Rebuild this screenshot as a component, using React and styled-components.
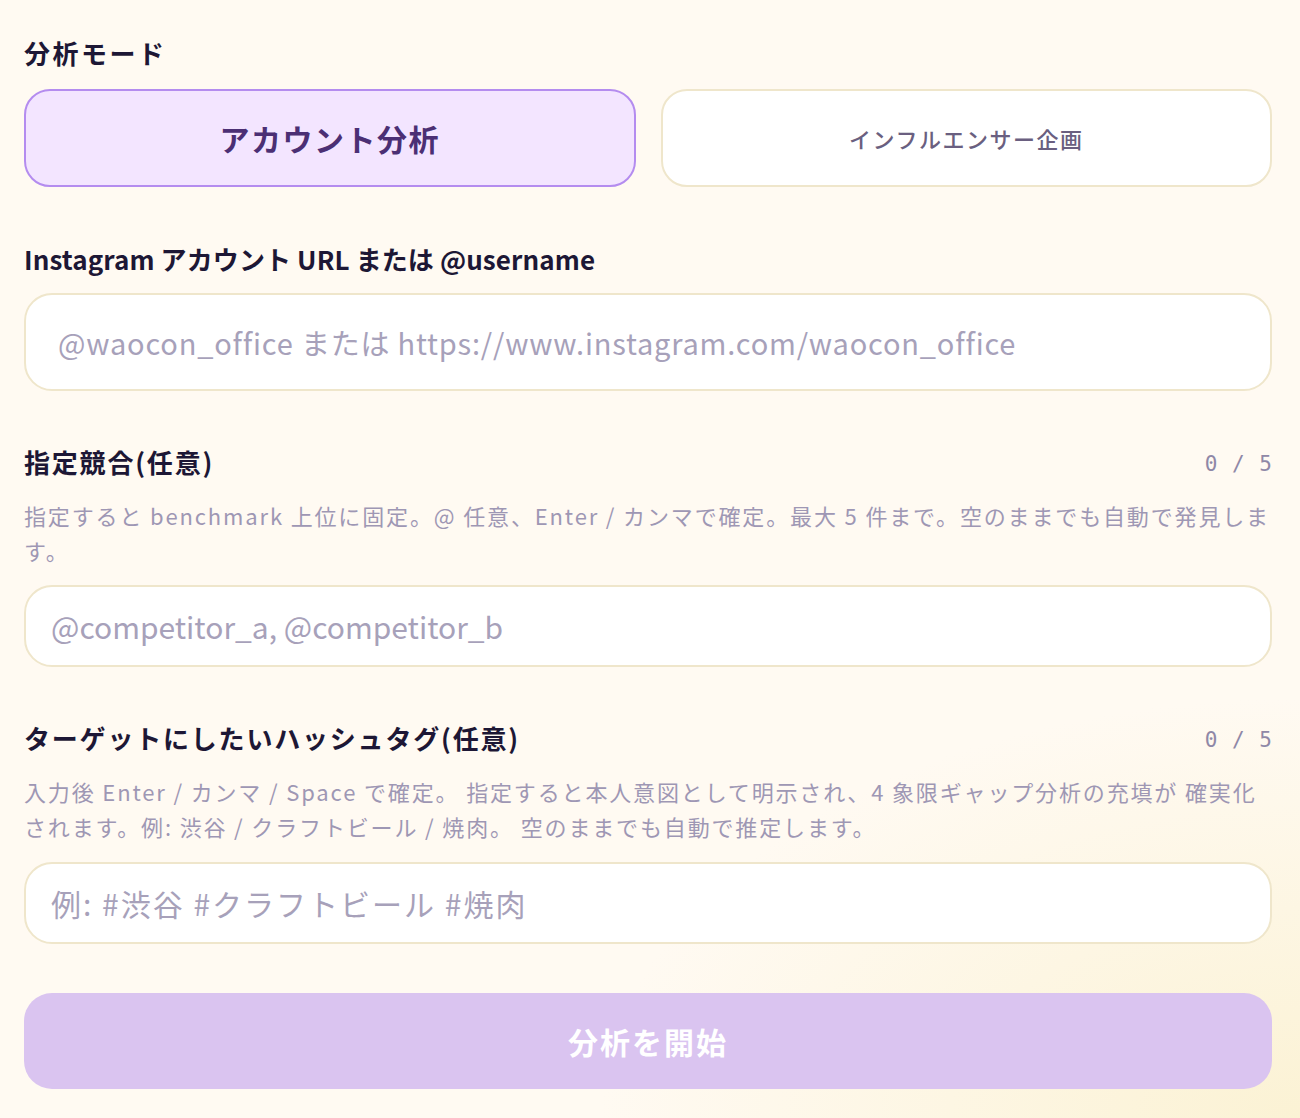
import React from 'react';
import styled, { createGlobalStyle } from 'styled-components';

const GlobalStyle = createGlobalStyle`
  html, body {
    margin: 0;
    padding: 0;
  }
  body {
    font-family: "Noto Sans CJK JP", "Noto Sans", sans-serif;
    background: #fffaf2;
    min-height: 100vh;
  }
  * {
    box-sizing: border-box;
  }
`;

const Page = styled.div`
  min-height: 1118px;
  padding: 35px 28px 28px 24px;
  background:
    radial-gradient(ellipse 700px 420px at 100% 100%, #fbf2d4 0%, rgba(251, 242, 212, 0) 100%),
    #fffaf2;
`;

const Field = styled.section`
  margin-top: ${p => p.$gap || 0}px;
`;

const LabelRow = styled.div`
  display: flex;
  align-items: center;
  justify-content: space-between;
`;

const Label = styled.h2`
  margin: 0;
  font-size: 26px;
  line-height: 36px;
  font-weight: 700;
  color: #1d1735;
  letter-spacing: ${p => p.$ls ?? 1.8}px;
`;

const Counter = styled.span`
  font-family: "DejaVu Sans Mono", "Liberation Mono", monospace;
  font-size: 21px;
  color: #8f88a7;
  letter-spacing: 1px;
  padding-top: 4px;
  margin-right: -1px;
`;

const Helper = styled.p`
  margin: 18px 0 0;
  font-size: 22px;
  line-height: 35px;
  color: #9e97b4;
  letter-spacing: 1.85px;
`;

const ModeGrid = styled.div`
  display: grid;
  grid-template-columns: 1fr 1fr;
  gap: 25px;
  margin-top: 18px;
`;

const ModeButton = styled.button`
  height: 98px;
  border-radius: 26px;
  font-family: inherit;
  cursor: pointer;
  border: 2px solid ${p => (p.$active ? '#b48cef' : '#efe6cb')};
  background: ${p => (p.$active ? '#f3e5ff' : '#ffffff')};
  color: ${p => (p.$active ? '#4b2f74' : '#6a5f80')};
  font-size: ${p => (p.$active ? '30px' : '22px')};
  font-weight: ${p => (p.$active ? 700 : 500)};
  letter-spacing: 1.5px;
`;

const Input = styled.input`
  display: block;
  width: 100%;
  height: ${p => p.$h || 82}px;
  margin-top: ${p => p.$mt || 17}px;
  padding: 0 0 0 ${p => p.$pl || 25}px;
  border: 2px solid #efe6cb;
  border-radius: 28px;
  background: #ffffff;
  font-family: inherit;
  font-size: ${p => p.$fs || 29}px;
  letter-spacing: ${p => p.$ls ?? 0.8}px;
  color: #1d1735;
  outline: none;

  &::placeholder {
    color: #a7a1ba;
  }
`;

const Submit = styled.button`
  display: block;
  width: 100%;
  height: 96px;
  margin-top: 49px;
  border: none;
  border-radius: 28px;
  background: #dac4f0;
  color: #ffffff;
  font-family: inherit;
  font-size: 30px;
  font-weight: 700;
  letter-spacing: 2px;
`;

export default function App() {
  return (
    <>
      <GlobalStyle />
      <Page>
        <Field>
          <Label $ls={2.5}>分析モード</Label>
          <ModeGrid>
            <ModeButton $active>アカウント分析</ModeButton>
            <ModeButton>インフルエンサー企画</ModeButton>
          </ModeGrid>
        </Field>

        <Field $gap={54}>
          <Label $ls={0.1}>Instagram アカウント URL または @username</Label>
          <Input
            $h={98}
            $mt={16}
            $pl={32}
            placeholder="@waocon_office または https://www.instagram.com/waocon_office"
          />
        </Field>

        <Field $gap={53}>
          <LabelRow>
            <Label>指定競合(任意)</Label>
            <Counter>0 / 5</Counter>
          </LabelRow>
          <Helper>
            指定すると benchmark 上位に固定。@ 任意、Enter / カンマで確定。最大 5 件まで。空のままでも自動で発見します。
          </Helper>
          <Input $fs={30} $ls={0} placeholder="@competitor_a, @competitor_b" />
        </Field>

        <Field $gap={53}>
          <LabelRow>
            <Label>ターゲットにしたいハッシュタグ(任意)</Label>
            <Counter>0 / 5</Counter>
          </LabelRow>
          <Helper>
            入力後 Enter / カンマ / Space で確定。 指定すると本人意図として明示され、4 象限ギャップ分析の充填が 確実化されます。例: 渋谷 / クラフトビール / 焼肉。 空のままでも自動で推定します。
          </Helper>
          <Input $mt={18} $fs={30} $ls={2} placeholder="例: #渋谷 #クラフトビール #焼肉" />
        </Field>

        <Submit>分析を開始</Submit>
      </Page>
    </>
  );
}
